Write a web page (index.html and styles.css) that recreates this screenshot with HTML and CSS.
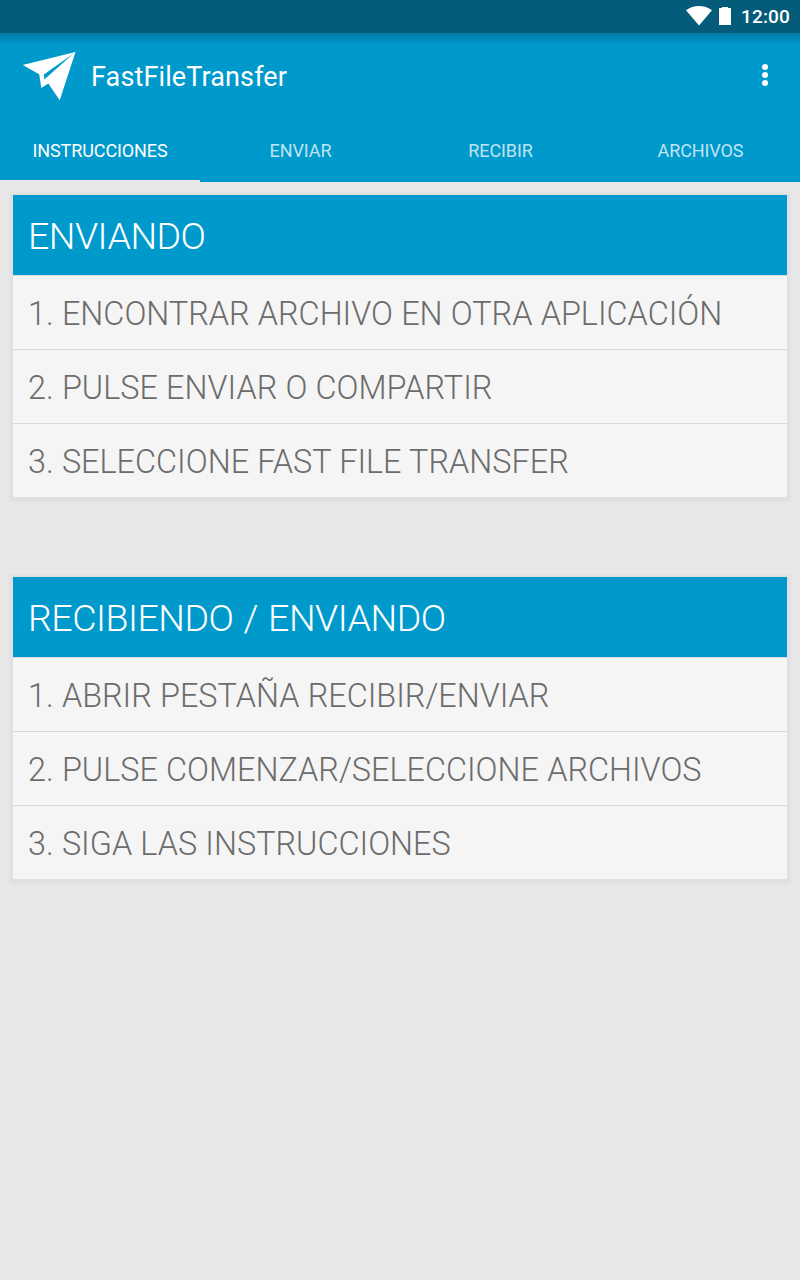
FILE: index.html
```html
<!DOCTYPE html>
<html lang="es">
<head>
  <meta charset="utf-8">
  <meta name="viewport" content="width=device-width, initial-scale=1.0">
  <title>FastFileTransfer</title>
  <link rel="stylesheet" href="styles.css">
</head>
<body>
  <div class="status-bar">
    <svg class="wifi-icon" width="26" height="20" viewBox="0 0 26 20">
      <path d="M0 4.3C7.5-1.4 18.500-1.400 26 4.300L13 19.500Z"/>
    </svg>
    <svg class="battery-icon" width="12" height="18" viewBox="0 0 12 18">
      <path d="M3 0h6v1h3v17H0V1h3z"/>
    </svg>
    <span class="clock">12:00</span>
  </div>

  <header class="app-bar">
    <svg class="logo" width="54" height="50" viewBox="0 0 54 50">
      <path d="M53.500 1L.7 13.900 17.200 23.200 19.300 37 26.300 32.500 37.700 49.200ZM51.500 2.500L22.300 28.500 21.900 23.500Z" fill-rule="evenodd"/>
    </svg>
    <h1 class="title">FastFileTransfer</h1>
    <svg class="menu-icon" width="6" height="22" viewBox="0 0 6 22">
      <circle cx="3" cy="3" r="3"/>
      <circle cx="3" cy="11" r="3"/>
      <circle cx="3" cy="19" r="3"/>
    </svg>
  </header>

  <nav class="tabs">
    <div class="tab active">INSTRUCCIONES</div>
    <div class="tab">ENVIAR</div>
    <div class="tab">RECIBIR</div>
    <div class="tab">ARCHIVOS</div>
  </nav>

  <main class="content">
    <section class="card">
      <h2 class="card-header">ENVIANDO</h2>
      <div class="card-row">1. ENCONTRAR ARCHIVO EN OTRA APLICACIÓN</div>
      <div class="card-row">2. PULSE ENVIAR O COMPARTIR</div>
      <div class="card-row">3. SELECCIONE FAST FILE TRANSFER</div>
    </section>

    <section class="card">
      <h2 class="card-header">RECIBIENDO / ENVIANDO</h2>
      <div class="card-row">1. ABRIR PESTAÑA RECIBIR/ENVIAR</div>
      <div class="card-row">2. PULSE COMENZAR/SELECCIONE ARCHIVOS</div>
      <div class="card-row">3. SIGA LAS INSTRUCCIONES</div>
    </section>
  </main>
</body>
</html>
```
FILE: styles.css
```css
:root {
  --blue: #0099cc;
  --blue-dark: #055c7a;
  --page-bg: #e8e8e8;
  --card-bg: #f5f5f5;
  --divider: #dadada;
  --text-color: #6c6c6c;
}

* {
  box-sizing: border-box;
  margin: 0;
  padding: 0;
}

body {
  font-family: Roboto, sans-serif;
  background-color: var(--page-bg);
  min-height: 100vh;
}

svg {
  display: block;
  fill: #fff;
  flex: none;
}

.status-bar {
  display: flex;
  justify-content: flex-end;
  align-items: center;
  height: 33px;
  padding-right: 10px;
  background-color: var(--blue-dark);
  color: #fff;
}

.wifi-icon {
  margin: 0 7px 2px 0;
}

.battery-icon {
  margin: 0 10px 1px 0;
}

.clock {
  font-size: 19px;
  font-weight: 500;
  line-height: 33px;
  letter-spacing: 0.15px;
}

.app-bar {
  display: flex;
  align-items: center;
  height: 87px;
  padding: 0 32px 2px 22px;
  background: linear-gradient(#007ba4, var(--blue) 11px);
}

.title {
  flex: 1;
  margin-left: 15px;
  padding-top: 2px;
  font-size: 27px;
  font-weight: 400;
  letter-spacing: 0.12px;
  color: #fff;
}

.menu-icon {
  margin-bottom: 2px;
}

.tabs {
  display: grid;
  grid-template-columns: repeat(4, 1fr);
  height: 62px;
  background-color: var(--blue);
}

.tab {
  padding-left: 1px;
  font-size: 18px;
  line-height: 62px;
  letter-spacing: -0.1px;
  text-align: center;
  color: rgba(255, 255, 255, 0.75);
}

.tab.active {
  height: 62px;
  padding-left: 0;
  color: #fff;
  border-bottom: 2px solid var(--page-bg);
}

.content {
  padding: 13px;
}

.card {
  margin-bottom: 80px;
  background-color: var(--card-bg);
  box-shadow: 0 1px 2px 4px rgba(0, 0, 0, 0.03);
}

.card-header {
  height: 80px;
  padding-left: 15px;
  font-size: 37.5px;
  font-weight: 300;
  line-height: 82px;
  letter-spacing: -0.5px;
  word-spacing: 1.5px;
  background-color: var(--blue);
  color: #fff;
}

.card-row {
  height: 74px;
  padding-left: 15px;
  border-top: 1px solid var(--divider);
  font-size: 32.4px;
  font-weight: 300;
  line-height: 76px;
  word-spacing: 0.3px;
  color: var(--text-color);
}
```
